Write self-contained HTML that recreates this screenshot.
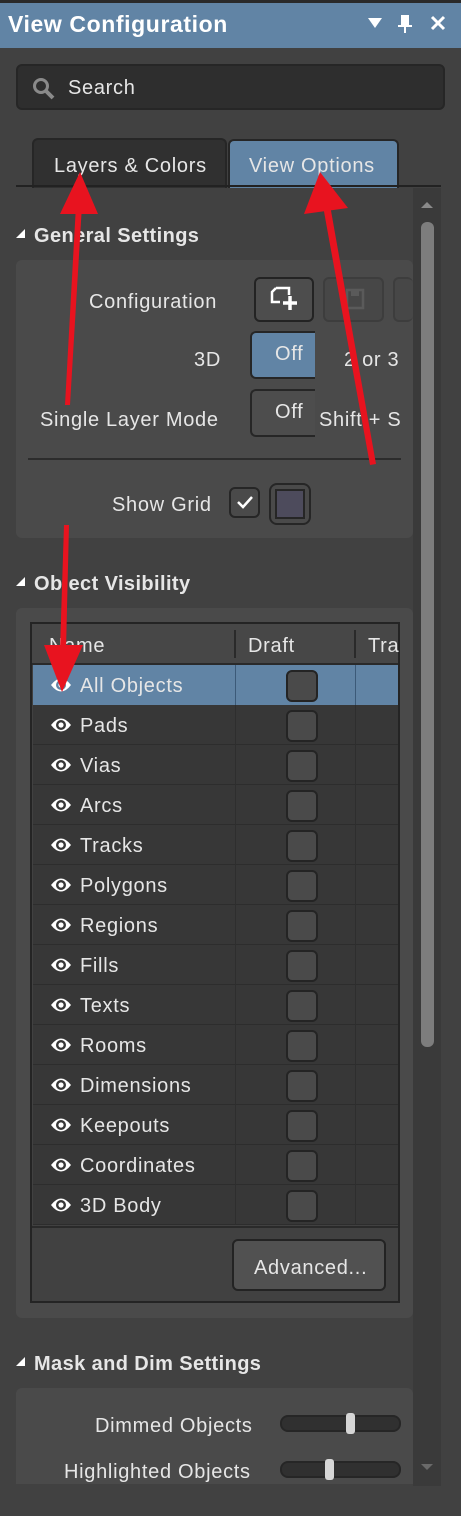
<!DOCTYPE html>
<html><head><style>
*{margin:0;padding:0;box-sizing:border-box}
body{width:461px;height:1516px;background:#414141;font-family:"Liberation Sans","DejaVu Sans",sans-serif;color:#e6e6e6;position:relative;overflow:hidden}
.a{position:absolute}
.t{font-size:20px;white-space:nowrap;letter-spacing:0.7px;margin-top:2px}
.btn{position:absolute;border:2px solid #232323;border-radius:6px;background:#4d4d4d}
.cb{position:absolute;width:32px;height:32px;border:2px solid #242424;border-radius:6px;background:#4a4a4a}
.row{position:absolute;left:33px;width:365px;height:40px;background:#373737;border-bottom:1px solid #2d2d2d}
.row .n{position:absolute;left:47px;top:10px;font-size:20px;letter-spacing:0.7px}
.row .e{position:absolute;left:17px;top:11px}
.h{font-weight:bold;font-size:20px;letter-spacing:0.4px;margin-top:2px}
</style></head><body>
<div class="a" style="left:0;top:0;width:461px;height:3px;background:#2a2a2a"></div>
<div class="a" style="left:0;top:3px;width:461px;height:45px;background:#6184a5"></div>
<div class="a" style="left:8px;top:11px;font-weight:bold;font-size:23px;color:#fff;white-space:nowrap;letter-spacing:0.6px">View Configuration</div>
<svg class="a" style="left:366px;top:14px" width="90" height="22"><polygon points="2,4 16,4 9,14" fill="#fff"/><rect x="35" y="1" width="8" height="11" fill="#fff"/><rect x="32" y="11" width="14" height="2" fill="#fff"/><rect x="38" y="13" width="2" height="6" fill="#fff"/><path d="M66 3 L78 15 M78 3 L66 15" stroke="#fff" stroke-width="3"/></svg>
<div class="a" style="left:16px;top:64px;width:429px;height:46px;background:#2e2e2e;border:2px solid #262626;border-radius:6px"></div>
<svg class="a" style="left:32px;top:77px" width="24" height="24"><circle cx="9" cy="9" r="6.5" stroke="#8a8a8a" stroke-width="3" fill="none"/><path d="M14 14 L21 21" stroke="#8a8a8a" stroke-width="4"/></svg>
<div class="a t" style="left:68px;top:75px">Search</div>
<div class="a" style="left:32px;top:138px;width:195px;height:50px;background:#303030;border:2px solid #262626;border-bottom:none;border-radius:6px 6px 0 0"></div>
<div class="a t" style="left:54px;top:153px">Layers &amp; Colors</div>
<div class="a" style="left:228px;top:139px;width:171px;height:49px;background:#6184a5;border:2px solid #262626;border-bottom:none;border-radius:6px 6px 0 0"></div>
<div class="a t" style="left:249px;top:153px">View Options</div>
<div class="a" style="left:16px;top:185px;width:425px;height:2px;background:#222"></div>
<div class="a" style="left:413px;top:188px;width:28px;height:1298px;background:#3a3a3a"></div>
<svg class="a" style="left:419px;top:199px" width="16" height="10"><polygon points="2,9 14,9 8,3" fill="#8a8a8a"/></svg>
<div class="a" style="left:421px;top:222px;width:13px;height:825px;border-radius:6px;background:#7d7d7d"></div>
<svg class="a" style="left:419px;top:1462px" width="16" height="10"><polygon points="2,2 14,2 8,8" fill="#6a6a6a"/></svg>
<svg class="a" style="left:16px;top:229px" width="10" height="10"><polygon points="0,9 9,9 9,0" fill="#fff"/></svg>
<div class="a h" style="left:34px;top:223px">General Settings</div>
<div class="a" style="left:16px;top:260px;width:397px;height:278px;background:#4a4a4a;border-radius:6px"></div>
<div class="a t" style="left:89px;top:289px">Configuration</div>
<div class="btn" style="left:254px;top:277px;width:60px;height:45px"></div>
<svg class="a" style="left:270px;top:286px" width="30" height="26"><path d="M6 2 H19 V9 M10 16 H2 V6 L6 2" stroke="#fff" stroke-width="2.5" fill="none"/><path d="M20 10 V24 M13 17 H27" stroke="#fff" stroke-width="3.5"/></svg>
<div class="btn" style="left:323px;top:277px;width:61px;height:45px;border-color:#3d3d3d;background:#474747"></div>
<svg class="a" style="left:345px;top:288px" width="20" height="22"><rect x="2" y="2" width="16" height="18" fill="none" stroke="#5a5a5a" stroke-width="2.5"/><rect x="6" y="2" width="8" height="6" fill="#5a5a5a"/></svg>
<div class="btn" style="left:393px;top:277px;width:20px;height:45px;border-color:#3d3d3d;border-right:none;background:#474747"></div>
<div class="a t" style="left:194px;top:347px">3D</div>
<div class="a" style="left:250px;top:331px;width:65px;height:48px;background:#6184a5;border:2px solid #262626;border-right:none;border-radius:6px 0 0 6px"></div>
<div class="a t" style="left:275px;top:341px">Off</div>
<div class="a t" style="left:344px;top:347px">2 or 3</div>
<div class="a t" style="left:40px;top:407px">Single Layer Mode</div>
<div class="a" style="left:250px;top:389px;width:65px;height:48px;background:#4d4d4d;border:2px solid #262626;border-right:none;border-radius:6px 0 0 6px"></div>
<div class="a t" style="left:275px;top:399px">Off</div>
<div class="a t" style="left:319px;top:407px">Shift + S</div>
<div class="a" style="left:28px;top:458px;width:373px;height:2px;background:#2c2c2c"></div>
<div class="a t" style="left:112px;top:492px">Show Grid</div>
<div class="a" style="left:229px;top:487px;width:31px;height:31px;border:2px solid #262626;border-radius:6px;background:#4a4a4a"></div>
<svg class="a" style="left:235px;top:494px" width="20" height="16"><path d="M3 8 L8 13 L17 3" stroke="#fff" stroke-width="2.5" fill="none"/></svg>
<div class="a" style="left:269px;top:483px;width:42px;height:42px;border:2px solid #262626;border-radius:8px;background:#4a4a4a"></div>
<div class="a" style="left:275px;top:489px;width:30px;height:30px;border:2px solid #262626;background:#4d4b5c"></div>
<svg class="a" style="left:16px;top:577px" width="10" height="10"><polygon points="0,9 9,9 9,0" fill="#fff"/></svg>
<div class="a h" style="left:34px;top:571px">Object Visibility</div>
<div class="a" style="left:16px;top:608px;width:397px;height:710px;background:#4a4a4a;border-radius:6px"></div>
<div class="a" style="left:30px;top:622px;width:370px;height:681px;border:2px solid #242424;background:#414141"></div>
<div class="a" style="left:32px;top:624px;width:366px;height:41px;background:#474747;border-bottom:2px solid #2a2a2a"></div>
<div class="a t" style="left:49px;top:633px">Name</div>
<div class="a" style="left:234px;top:630px;width:2px;height:28px;background:#2a2a2a"></div>
<div class="a t" style="left:248px;top:633px">Draft</div>
<div class="a" style="left:354px;top:630px;width:2px;height:28px;background:#2a2a2a"></div>
<div class="a t" style="left:368px;top:633px">Tra</div>
<div id="rows"></div>
<div class="a" style="left:32px;top:1226px;width:366px;height:2px;background:#2a2a2a"></div>
<div class="btn" style="left:232px;top:1239px;width:154px;height:52px;background:#515151"></div>
<div class="a t" style="left:254px;top:1255px">Advanced...</div>
<svg class="a" style="left:16px;top:1357px" width="10" height="10"><polygon points="0,9 9,9 9,0" fill="#fff"/></svg>
<div class="a h" style="left:34px;top:1351px">Mask and Dim Settings</div>
<div class="a" style="left:16px;top:1388px;width:397px;height:96px;background:#4a4a4a;border-radius:6px 6px 0 0"></div>
<div class="a t" style="left:95px;top:1413px">Dimmed Objects</div>
<div class="a" style="left:280px;top:1415px;width:121px;height:17px;background:#303030;border:2px solid #262626;border-radius:8px"></div>
<div class="a" style="left:346px;top:1413px;width:9px;height:21px;background:#d6d6d6;border-radius:3px"></div>
<div class="a t" style="left:64px;top:1459px">Highlighted Objects</div>
<div class="a" style="left:280px;top:1461px;width:121px;height:17px;background:#303030;border:2px solid #262626;border-radius:8px"></div>
<div class="a" style="left:325px;top:1459px;width:9px;height:21px;background:#d6d6d6;border-radius:3px"></div>
<svg class="a" style="left:0;top:0" width="461" height="1516">
<g fill="#e8131f">
<polygon points="65,405 70,405 82,205 76,205"/><polygon points="80,172 60,214 98,214"/>
<polygon points="370,465 376,464 330,205 323,206"/><polygon points="320,172 304,214 348,208"/>
<polygon points="64,525 69,525 66,650 60,650"/><polygon points="62,692 44,645 83,645"/>
</g></svg>
<script>
var names=["All Objects","Pads","Vias","Arcs","Tracks","Polygons","Regions","Fills","Texts","Rooms","Dimensions","Keepouts","Coordinates","3D Body"];
var h="";
for(var i=0;i<names.length;i++){var y=665+i*40;var sel=i==0;
h+='<div class="row" style="top:'+y+'px;'+(sel?'background:#6184a5;border-bottom-color:#6184a5':'')+'">'+
'<svg class="e" width="22" height="18"><path d="M1 9 Q11 -4 21 9 Q11 22 1 9Z" fill="#fff"/><circle cx="11" cy="9" r="5" fill="'+(sel?'#6184a5':'#373737')+'"/><circle cx="11" cy="9" r="2.6" fill="#fff"/></svg>'+
'<div class="n">'+names[i]+'</div>'+
'<div style="position:absolute;left:202px;top:0;width:1px;height:40px;background:'+(sel?'#3c5a78':'#2e2e2e')+'"></div>'+
'<div style="position:absolute;left:322px;top:0;width:1px;height:40px;background:'+(sel?'#3c5a78':'#2e2e2e')+'"></div>'+
'<div class="cb" style="left:253px;top:5px"></div></div>';}
document.getElementById("rows").innerHTML=h;
</script>
</body></html>
